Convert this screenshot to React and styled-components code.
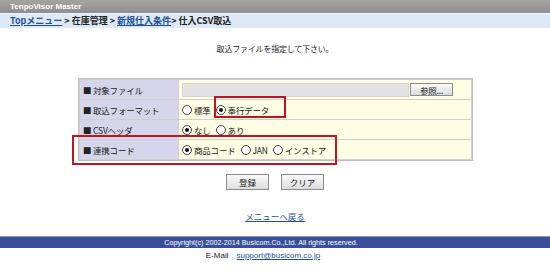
import React from 'react'
import styled, { createGlobalStyle } from 'styled-components';

const GlobalStyle = createGlobalStyle`
  body {
    margin: 0;
    background: #ffffff;
    font-family: "Noto Sans CJK JP", "DejaVu Sans", sans-serif;
    font-size: 9px;
    color: #222;
  }
`;

const Page = styled.div`
  width: 550px;
  height: 269px;
  display: flex;
  flex-direction: column;
  overflow: hidden;
`;

const TitleBar = styled.div`
  height: 13px;
  background: linear-gradient(180deg, #a4a4a4 0%, #8e8e8e 100%);
  color: #fff;
  font-family: "Liberation Sans", sans-serif;
  font-weight: bold;
  font-size: 8px;
  line-height: 13px;
  padding-left: 10px;
`;

const Crumbs = styled.div`
  height: 14px;
  background: #dde9f6;
  border-top: 1px solid #f2f6fb;
  line-height: 14px;
  padding-left: 10px;
  font-size: 9px;
  font-weight: bold;
  color: #222;
`;

const Link = styled.a`
  color: #1d4f9c;
  text-decoration: underline;
`;

const Notice = styled.div`
  margin-top: 15px;
  text-align: center;
  font-size: 8px;
  letter-spacing: -0.2px;
  line-height: 12px;
`;

const FormWrap = styled.div`
  position: relative;
  align-self: center;
  margin-top: 23px;
  margin-left: 1px;
`;

const FormTable = styled.div`
  width: 391px;
  display: grid;
  grid-template-columns: 98px 1fr;
  gap: 1px;
  background: #cfcfcf;
  border: 1px solid #bdbdbd;
  padding: 1px;
  font-size: 8.5px;
  letter-spacing: -0.2px;
`;

const Label = styled.div`
  height: 19px;
  background: #d5d5ec;
  display: flex;
  align-items: center;
  padding-left: 3px;
`;

const Value = styled.div`
  height: 19px;
  background: #fffde3;
  display: flex;
  align-items: center;
  padding-left: 3px;
  gap: 5px;
`;

const FileField = styled.div`
  width: 225px;
  height: 12px;
  background: #e2e2e2;
  border: 1px solid #d4d4d4;
`;

const Button = styled.div`
  width: ${p => p.$w || 41}px;
  height: ${p => p.$h || 14}px;
  margin-left: ${p => p.$ml || 0}px;
  border: 1px solid #8c8c8c;
  background: linear-gradient(180deg, #fafafa 0%, #dcdcdc 100%);
  display: flex;
  align-items: center;
  justify-content: center;
  font-size: 8.5px;
  color: #222;
`;

const Choice = styled.span`
  display: inline-flex;
  align-items: center;
  gap: 2px;
`;

const Radio = styled.span`
  width: 8px;
  height: 8px;
  border-radius: 50%;
  border: 1px solid #444;
  background: #fff;
  display: inline-flex;
  align-items: center;
  justify-content: center;

  &::after {
    content: '';
    width: 4px;
    height: 4px;
    border-radius: 50%;
    background: ${p => (p.$on ? '#111' : 'transparent')};
  }
`;

const RedBox = styled.div`
  position: absolute;
  left: ${p => p.$x}px;
  top: ${p => p.$y}px;
  width: ${p => p.$w}px;
  height: ${p => p.$h}px;
  border: 2px solid #c3141f;
  box-sizing: border-box;
  pointer-events: none;
`;

const Actions = styled.div`
  display: flex;
  justify-content: center;
  gap: 12px;
  margin-top: 13px;
`;

const BackLink = styled.div`
  margin-top: 20px;
  text-align: center;
  font-size: 8.5px;
  line-height: 12px;
`;

const Footer = styled.div`
  margin-top: 14px;
  height: 11px;
  background: #3a4f97;
  border-top: 1px solid #8594c4;
  color: #fff;
  font-family: "Liberation Sans", sans-serif;
  font-size: 7.2px;
  line-height: 11px;
  text-align: center;
  padding-right: 28px;
`;

const Mail = styled.div`
  margin-top: 2px;
  font-family: "Liberation Sans", sans-serif;
  font-size: 8px;
  line-height: 12px;
  display: flex;
  justify-content: center;
  gap: 8px;
  padding-right: 24px;
`;

const Row = ({ label, children }) => (
  <>
    <Label>■ {label}</Label>
    <Value>{children}</Value>
  </>
);

const Opt = ({ on, children }) => (
  <Choice>
    <Radio $on={on} />
    {children}
  </Choice>
);

const App = () => {
  return (
    <Page>
      <GlobalStyle />
      <TitleBar>TenpoVisor Master</TitleBar>
      <Crumbs>
        <Link>Topメニュー</Link> &gt; 在庫管理 &gt; <Link>新規仕入条件</Link>&gt; 仕入CSV取込
      </Crumbs>
      <Notice>取込ファイルを指定して下さい。</Notice>
      <FormWrap>
        <FormTable>
          <Row label="対象ファイル">
            <FileField />
            <Button $w={41} $h={11} $ml={-4}>参照...</Button>
          </Row>
          <Row label="取込フォーマット">
            <Opt>標準</Opt>
            <Opt on>奉行データ</Opt>
          </Row>
          <Row label="CSVヘッダ">
            <Opt on>なし</Opt>
            <Opt>あり</Opt>
          </Row>
          <Row label="連携コード">
            <Opt on>商品コード</Opt>
            <Opt>JAN</Opt>
            <Opt>インストア</Opt>
          </Row>
        </FormTable>
        <RedBox $x={136} $y={18} $w={72} $h={22} />
        <RedBox $x={-6} $y={57} $w={265} $h={30} />
      </FormWrap>
      <Actions>
        <Button>登録</Button>
        <Button>クリア</Button>
      </Actions>
      <BackLink>
        <Link>メニューへ戻る</Link>
      </BackLink>
      <Footer>Copyright(c) 2002-2014 Busicom.Co.,Ltd. All rights reserved.</Footer>
      <Mail>
        <span>E-Mail</span>
        <Link>support@busicom.co.jp</Link>
      </Mail>
    </Page>
  )
}

export default App
